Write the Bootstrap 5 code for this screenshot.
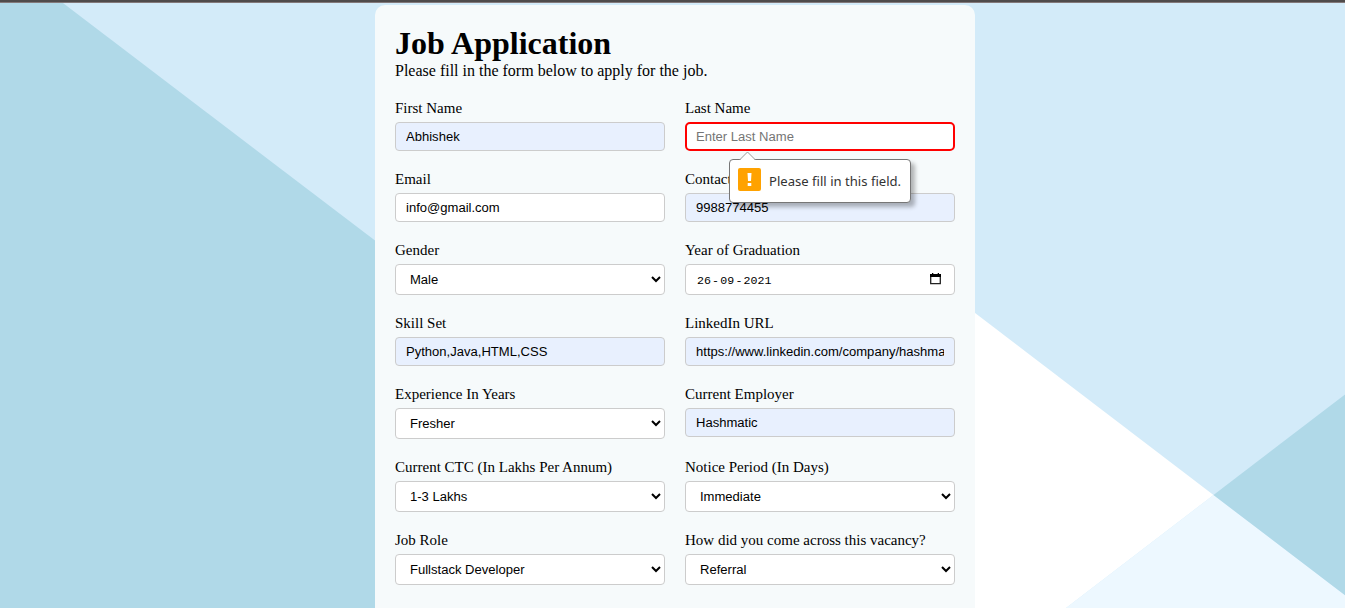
<!DOCTYPE html>
<html lang="en">
<head>
<meta charset="utf-8">
<meta name="viewport" content="width=device-width, initial-scale=1">
<title>Job Application</title>
<link href="https://cdn.jsdelivr.net/npm/bootstrap@5.3.0/dist/css/bootstrap.min.css" rel="stylesheet">
<style>
body{font-family:"Liberation Serif",serif;color:#000;background:#d3ebf9;height:608px;line-height:1.2}
.backdrop{z-index:-1}
.topbar{height:3px;background:#4f4b4b;border-bottom:1px solid #83797a}
.page{padding-left:5px}
.sheet{width:600px;height:603px;margin-top:2px;padding:20px 20px 0;background:#f6fafb;border-radius:10px 10px 0 0}
.title{font-size:32px;font-weight:700;line-height:37px;margin:0}
.intro{font-size:16px;line-height:18px;margin:0 0 20px}
.fields{display:grid;grid-template-columns:270px 270px;column-gap:20px;row-gap:20px}
.caption{display:block;font-size:15px;line-height:17px;margin-bottom:5px}
.box{font:13.05px/15px "Liberation Sans",sans-serif;color:#000;border:1px solid #ccc;border-radius:4px;padding:6px 10px;height:29px;background:#fff}
.box.form-control:focus{box-shadow:none}
.box::placeholder{color:#757575}
.filled{background:#e8f0fe}
.missing{border:2px solid #f00;border-radius:5px;padding:5px 9px}
select.box,.datebox{height:31px;width:100%}
select.box{display:block}
.datebox{font:11.6px/17px "Liberation Mono",monospace;padding:7px 13px 5px 11px}
.dash{padding:0 1.2px}
.tip{left:44px;top:59px;width:182px;height:44px;z-index:2;background:#fff;border:1px solid #767676;border-radius:4px;box-shadow:4px 4px 4px rgba(0,0,0,.28);padding:0 8px;font:13.1px "Noto Sans",sans-serif;color:#333}
.tip-arrow{left:9px;top:-9px}
</style>
</head>
<body class="overflow-hidden">
<svg class="backdrop position-absolute top-0 start-0" width="1345" height="608" aria-hidden="true">
<rect width="1345" height="608" fill="#d3ebf9"/>
<path d="M0 0H59L858 608H0Z" fill="#b0d9e8"/>
<path d="M900 255.700L1213.500 495L1066 608H900Z" fill="#fff"/>
<path d="M1213.500 495L1362 608H1066Z" fill="#edf8ff"/>
<path d="M1345 394.500V595.300L1213.500 495Z" fill="#b0d9e8"/>
</svg>
<div class="topbar"></div>
<div class="page">
<main class="sheet mx-auto">
<h1 class="title">Job Application</h1>
<p class="intro">Please fill in the form below to apply for the job.</p>
<form class="fields" novalidate>
<div><label class="caption" for="fn">First Name</label><input id="fn" class="form-control box filled" value="Abhishek"></div>
<div class="position-relative"><label class="caption" for="ln">Last Name</label><input id="ln" class="form-control box missing" placeholder="Enter Last Name">
<div class="tip position-absolute d-flex align-items-center" role="alert">
<svg class="tip-arrow position-absolute" width="18" height="10"><path d="M0 10L8.500 1L17 10Z" fill="#fff"/><path d="M0.500 9L8.500 1L16.500 9" fill="none" stroke="#999"/></svg>
<svg class="flex-shrink-0" style="margin-top:-4px" width="23" height="23"><rect width="23" height="23" rx="2" fill="#ffa200"/><path d="M9.500 5H13.500L13 13H10ZM9.700 15H13.300V18H9.700Z" fill="#fff"/></svg>
<span class="text-nowrap" style="margin-left:8px">Please fill in this field.</span>
</div></div>
<div><label class="caption" for="em">Email</label><input id="em" class="form-control box" value="info@gmail.com"></div>
<div><label class="caption" for="cn">Contact</label><input id="cn" class="form-control box filled" value="9988774455"></div>
<div><label class="caption" for="ge">Gender</label><select id="ge" class="box"><option>Male</option></select></div>
<div><span class="caption">Year of Graduation</span><div class="box datebox d-flex justify-content-between"><span>26<span class="dash">-</span>09<span class="dash">-</span>2021</span>
<svg width="11" height="12" style="margin-top:1px"><path d="M.7 2V10.700H10.300V2" fill="none" stroke="#222" stroke-width="1.300"/><path d="M0 1H2V0H3.300V1H7.700V0H9V1H11V4H0Z" fill="#000"/></svg></div></div>
<div><label class="caption" for="sk">Skill Set</label><input id="sk" class="form-control box filled" value="Python,Java,HTML,CSS"></div>
<div><label class="caption" for="li">LinkedIn URL</label><input id="li" class="form-control box filled" value="https://www.linkedin.com/company/hashma"></div>
<div><label class="caption" for="ex">Experience In Years</label><select id="ex" class="box"><option>Fresher</option></select></div>
<div><label class="caption" for="ce">Current Employer</label><input id="ce" class="form-control box filled" value="Hashmatic"></div>
<div><label class="caption" for="ct">Current CTC (In Lakhs Per Annum)</label><select id="ct" class="box"><option>1-3 Lakhs</option></select></div>
<div><label class="caption" for="np">Notice Period (In Days)</label><select id="np" class="box"><option>Immediate</option></select></div>
<div><label class="caption" for="jr">Job Role</label><select id="jr" class="box"><option>Fullstack Developer</option></select></div>
<div><label class="caption" for="hw">How did you come across this vacancy?</label><select id="hw" class="box"><option>Referral</option></select></div>
</form>
</main>
</div>
<script src="https://cdn.jsdelivr.net/npm/bootstrap@5.3.0/dist/js/bootstrap.bundle.min.js"></script>
</body>
</html>
